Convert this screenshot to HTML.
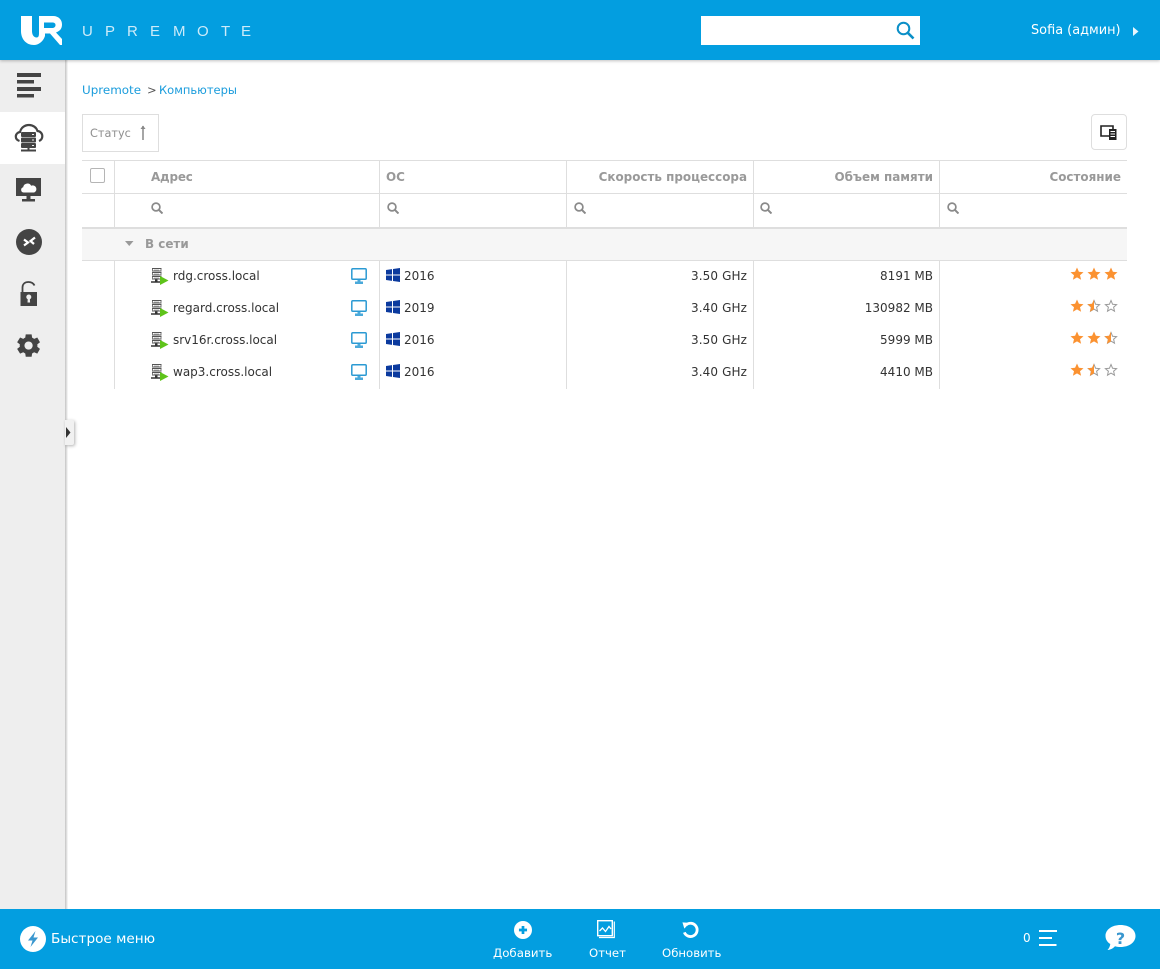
<!DOCTYPE html>
<html lang="ru"><head><meta charset="utf-8"><title>Upremote</title>
<style>
html,body{margin:0;padding:0;width:1160px;height:969px;overflow:hidden;background:#fff;font-family:"DejaVu Sans","Liberation Sans",sans-serif;color:#333}
.a{position:absolute}
svg{position:absolute;display:block;overflow:visible}
.t{position:absolute;white-space:nowrap;font-size:12px;line-height:16px;color:#333}
.r{text-align:right}
.h{font-weight:bold;color:#999;font-size:11.950px}
.ln{position:absolute;background:#dedede}
</style></head><body>
<svg width="0" height="0" style="position:absolute"><defs>
<symbol id="mag" viewBox="0 0 12 12"><circle cx="5" cy="5" r="3.900" fill="none" stroke="#8a8a8a" stroke-width="1.700"/><path d="M7.800 7.800L11.500 11.500" stroke="#8a8a8a" stroke-width="2"/></symbol>
<symbol id="srv" viewBox="0 0 18 18"><path d="M1 .5h9.500M1 3h9.500M1 4.500h9.500M1 7h9.500M1 8.500h9.500M1 11h9.500" stroke="#555" stroke-width="1" fill="none"/><path d="M1 1h1v2H1zM9.500 1h1v2h-1zM1 5h1v2H1zM9.500 5h1v2h-1zM1 9h1v2H1zM9.500 9h1v2h-1z" fill="#777"/><path d="M3 1.500h5v1H3zM3 5.500h5v1H3zM3 9.500h5v1H3z" fill="#b5b5b5"/><path d="M0 13.200h4v-1.700h2.500v1.700h3v1.600H0z" fill="#333"/><path d="M9 8l8.500 4.500L9 17z" fill="#5ec31a"/></symbol>
<symbol id="mon" viewBox="0 0 16 16"><rect x=".8" y=".8" width="14.400" height="10.400" rx="1" fill="#fff" stroke="#2b9ad3" stroke-width="1.500"/><path d="M6.500 12h3v1.500H12V16H4v-2.500h2.500z" fill="#4aa9da"/></symbol>
<symbol id="win" viewBox="0 0 14 14"><path d="M0 2l6-.9V6.500H0zM7 1l7-1V6.500H7zM0 7.500h6v5.400L0 12zM7 7.500h7V14l-7-1z" fill="#0b3a9e"/></symbol>
<symbol id="sf" viewBox="0 0 14 14"><path d="M7 .5l1.900 4.300 4.600.4-3.500 3 1.100 4.600L7 10.400 2.900 12.800 4 8.200.5 5.200l4.600-.4z" fill="#fb9231"/></symbol>
<symbol id="sh" viewBox="0 0 14 14"><path d="M7 1.500l1.600 3.800 4 .3-3 2.600.9 4L7 10.100l-3.500 2.100.9-4-3-2.600 4-.3z" fill="#fff" stroke="#9a9a9a"/><path d="M7 .5v9.900L2.900 12.800 4 8.200.5 5.200l4.600-.4z" fill="#fb9231"/></symbol>
<symbol id="se" viewBox="0 0 14 14"><path d="M7 1.500l1.600 3.800 4 .3-3 2.600.9 4L7 10.100l-3.500 2.100.9-4-3-2.600 4-.3z" fill="#fff" stroke="#9a9a9a"/></symbol>
</defs></svg>

<!-- sidebar -->
<div class="a" style="left:0;top:60px;width:65px;height:849px;background:#eee"></div>
<div class="a" style="left:65px;top:60px;width:3px;height:849px;background:linear-gradient(90deg,#c4c4c4,#e8e8e8 70%,#fff)"></div>
<div class="a" style="left:0;top:112px;width:65px;height:52px;background:#fff"></div>

<!-- header -->
<div class="a" style="left:0;top:0;width:1160px;height:60px;background:#039ee0;box-shadow:0 1px 3px rgba(0,0,0,.25)"></div>
<svg style="left:0;top:0" width="270" height="60" viewBox="0 0 270 60">
<path d="M21 16H32V31C32 35 34 37.500 36.500 37.500C38.500 37.500 39 36 39 33V16H53C59 16 62 20 62 24.500C62 28.500 60 31 56 32.500L62 39V45H60L50 33.500H45V36C43 42 38 45 34 45C26 45 21 39 21 31Z" fill="#fff"/>
<path d="M44 22.500H52C54.500 22.500 55.500 23.500 55.500 25C55.500 27 54 28 52 28H44Z" fill="#039ee0"/>
<text y="36" x="82 105 127 150 173 197 221 241" font-family="'Liberation Sans',sans-serif" font-size="15" fill="#cdebf9">UPREMOTE</text>
</svg>

<div class="a" style="left:701px;top:16px;width:219px;height:29px;background:#fff"></div>
<svg style="left:896px;top:21px" width="19" height="19" viewBox="0 0 19 19"><circle cx="7.500" cy="7.500" r="5.800" fill="none" stroke="#0a8fc7" stroke-width="2"/><path d="M11.800 11.800L17.500 17.500" stroke="#0a8fc7" stroke-width="2.600"/></svg>
<div class="t" style="left:1031px;top:23px;color:#fff;font-size:12.900px">Sofia (админ)</div>
<svg style="left:1133px;top:27px" width="6" height="9"><path d="M0 0l5.500 4.500L0 9z" fill="#e8f6fd"/></svg>

<!-- sidebar icons -->
<svg style="left:17px;top:73px" width="24" height="25"><path d="M0 0h24v4H0zM0 7h17v3.500H0zM0 14h24v4H0zM0 21h17v3.500H0z" fill="#444"/></svg>
<svg style="left:15px;top:124px" width="28" height="28" viewBox="0 0 28 28"><path d="M4.500 17C1.500 16 .8 14 .8 12.500 .8 10 3 8.200 5 8 5.800 4 9.500 1 14 1c4 0 7.500 2.500 8.500 6 3 .3 4.800 2.600 4.800 5.200 0 2-1 3.800-3.300 4.800" fill="none" stroke="#444" stroke-width="2.200"/><rect x="6" y="8" width="15" height="5" rx="1" fill="#444"/><rect x="6" y="13.500" width="15" height="5" rx="1" fill="#444"/><rect x="6" y="19" width="15" height="5" rx="1" fill="#444"/><path d="M17 10h2v1h-2zM17 15.500h2v1h-2zM17 21h2v1h-2z" fill="#eee"/><path d="M12.500 24h2v2h-2zM6 25.500h15V27.500H6z" fill="#444"/></svg>
<svg style="left:16px;top:178px" width="26" height="26" viewBox="0 0 26 26"><rect x="0" y="0" width="25" height="18" fill="#444"/><path d="M10.500 18h4v3h-4zM6 21h13v2.500H6z" fill="#444"/><path d="M7.500 14.500a2.700 2.700 0 0 1-.3-5.300 4.300 4.300 0 0 1 8-1.500 3.500 3.500 0 0 1 3 6.800z" fill="#fff"/></svg>
<svg style="left:16px;top:229px" width="26" height="26" viewBox="0 0 26 26"><circle cx="13" cy="13" r="13" fill="#444"/><path d="M8 10.500l4 3-4 3" fill="none" stroke="#fff" stroke-width="2.200"/><path d="M19 8.500l-4.500 3.500 3.500 3" fill="none" stroke="#fff" stroke-width="2.200"/></svg>
<svg style="left:20px;top:281px" width="18" height="26" viewBox="0 0 18 26"><path d="M2.500 11V6.500C2.500 3 5 1 8.500 1c3 0 5 1.500 6 3.500" fill="none" stroke="#444" stroke-width="1.800"/><rect x="0.500" y="11" width="16.500" height="14" fill="#444"/><circle cx="8.800" cy="16" r="2.500" fill="#eee"/><path d="M7.800 16.500h2l.3 5H7.500z" fill="#eee"/></svg>
<svg style="left:16px;top:333px" width="25" height="25" viewBox="0 0 24 24"><path d="M19.400 13c.1-.3.100-.7.100-1s0-.7-.1-1l2.300-1.800-2.300-4-2.700 1.100c-.5-.4-1.100-.8-1.700-1L14.600 2.500h-5L9.200 5.300c-.6.200-1.200.6-1.700 1L4.800 5.200l-2.500 4L4.600 11c-.1.300-.1.700-.1 1s0 .7.100 1l-2.300 1.800 2.500 4 2.700-1.100c.5.400 1.100.8 1.700 1l.4 2.800h5l.4-2.800c.6-.2 1.200-.6 1.700-1l2.700 1.100 2.300-4zM12 15.500a3.500 3.500 0 1 1 0-7 3.500 3.500 0 0 1 0 7z" fill="#444" transform="translate(-1.500 -1.500) scale(1.130)"/></svg>
<div class="a" style="left:65px;top:420px;width:9px;height:25px;background:#f1f1f1;border-radius:0 2px 2px 0;box-shadow:1px 1px 3px rgba(0,0,0,.3)"></div>
<svg style="left:66px;top:427px" width="5" height="11"><path d="M0 0l4.500 5.500L0 11z" fill="#333"/></svg>

<!-- breadcrumb -->
<div class="t" style="left:82px;top:82px;color:#1a9cdc;font-size:11.900px">Upremote</div>
<div class="t" style="left:147px;top:82px;color:#555;font-size:11.500px">&gt;</div>
<div class="t" style="left:159px;top:82px;color:#1a9cdc;font-size:11.500px">Компьютеры</div>

<!-- toolbar -->
<div class="a" style="left:82px;top:114px;width:75px;height:36px;border:1px solid #dedede"></div>
<div class="t" style="left:90px;top:126px;color:#8f8f8f;font-size:11.300px">Статус</div>
<svg style="left:139px;top:125px" width="8" height="15"><path d="M4 1v14" stroke="#888" stroke-width="1.500"/><path d="M1.500 4L4 .5 6.500 4z" fill="#888"/></svg>
<div class="a" style="left:1091px;top:114px;width:34px;height:34px;border:1px solid #dedede;border-radius:4px"></div>
<svg style="left:1100px;top:125px" width="17" height="15" viewBox="0 0 17 15"><path d="M1 1h12v10H1z" fill="#fff" stroke="#222" stroke-width="1.600"/><rect x="9" y="4" width="7.500" height="11" fill="#222"/><path d="M10.500 6.500h4.500M10.500 9h4.500M10.500 11.500h4.500" stroke="#fff"/></svg>

<!-- table lines -->
<div class="ln" style="left:82px;top:160px;width:1045px;height:1px"></div>
<div class="ln" style="left:82px;top:193px;width:1045px;height:1px"></div>
<div class="a" style="left:82px;top:229px;width:1045px;height:31px;background:#f6f6f6"></div>
<div class="ln" style="left:82px;top:227px;width:1045px;height:2px"></div>
<div class="ln" style="left:82px;top:260px;width:1045px;height:1px"></div>
<div class="ln" style="left:114px;top:160px;width:1px;height:67px"></div>
<div class="ln" style="left:379px;top:160px;width:1px;height:67px"></div>
<div class="ln" style="left:566px;top:160px;width:1px;height:67px"></div>
<div class="ln" style="left:753px;top:160px;width:1px;height:67px"></div>
<div class="ln" style="left:939px;top:160px;width:1px;height:67px"></div>
<div class="ln" style="left:114px;top:261px;width:1px;height:128px"></div>
<div class="ln" style="left:379px;top:261px;width:1px;height:128px"></div>
<div class="ln" style="left:566px;top:261px;width:1px;height:128px"></div>
<div class="ln" style="left:753px;top:261px;width:1px;height:128px"></div>
<div class="ln" style="left:939px;top:261px;width:1px;height:128px"></div>

<!-- header cells -->
<div class="a" style="left:90px;top:168px;width:13px;height:13px;border:1px solid #b5b5b5;border-radius:2px"></div>
<div class="t h" style="left:151px;top:169px;letter-spacing:-.2px">Адрес</div>
<div class="t h" style="left:386px;top:169px">ОС</div>
<div class="t h r" style="left:547px;top:169px;width:200px">Скорость процессора</div>
<div class="t h r" style="left:733px;top:169px;width:200px">Объем памяти</div>
<div class="t h r" style="left:921px;top:169px;width:200px">Состояние</div>

<svg style="left:151px;top:202px" width="12" height="12"><use href="#mag"/></svg>
<svg style="left:387px;top:202px" width="12" height="12"><use href="#mag"/></svg>
<svg style="left:574px;top:202px" width="12" height="12"><use href="#mag"/></svg>
<svg style="left:760px;top:202px" width="12" height="12"><use href="#mag"/></svg>
<svg style="left:947px;top:202px" width="12" height="12"><use href="#mag"/></svg>

<svg style="left:125px;top:241px" width="9" height="5"><path d="M0 0h8.500L4.250 5z" fill="#999"/></svg>
<div class="t h" style="left:145px;top:236px">В сети</div>

<!-- row 1 -->
<svg style="left:151px;top:268px" width="18" height="18"><use href="#srv"/></svg>
<div class="t" style="left:173px;top:268px">rdg.cross.local</div>
<svg style="left:351px;top:268px" width="16" height="16"><use href="#mon"/></svg>
<svg style="left:386px;top:268px" width="14" height="14"><use href="#win"/></svg>
<div class="t" style="left:404px;top:268px">2016</div>
<div class="t r" style="left:546px;top:268px;width:201px;letter-spacing:.1px">3.50 GHz</div>
<div class="t r" style="left:733px;top:268px;width:200px">8191 MB</div>
<svg style="left:1070px;top:267px" width="14" height="14"><use href="#sf"/></svg>
<svg style="left:1087px;top:267px" width="14" height="14"><use href="#sf"/></svg>
<svg style="left:1104px;top:267px" width="14" height="14"><use href="#sf"/></svg>

<!-- row 2 -->
<svg style="left:151px;top:300px" width="18" height="18"><use href="#srv"/></svg>
<div class="t" style="left:173px;top:300px">regard.cross.local</div>
<svg style="left:351px;top:300px" width="16" height="16"><use href="#mon"/></svg>
<svg style="left:386px;top:300px" width="14" height="14"><use href="#win"/></svg>
<div class="t" style="left:404px;top:300px">2019</div>
<div class="t r" style="left:546px;top:300px;width:201px;letter-spacing:.1px">3.40 GHz</div>
<div class="t r" style="left:733px;top:300px;width:200px">130982 MB</div>
<svg style="left:1070px;top:299px" width="14" height="14"><use href="#sf"/></svg>
<svg style="left:1087px;top:299px" width="14" height="14"><use href="#sh"/></svg>
<svg style="left:1104px;top:299px" width="14" height="14"><use href="#se"/></svg>

<!-- row 3 -->
<svg style="left:151px;top:332px" width="18" height="18"><use href="#srv"/></svg>
<div class="t" style="left:173px;top:332px">srv16r.cross.local</div>
<svg style="left:351px;top:332px" width="16" height="16"><use href="#mon"/></svg>
<svg style="left:386px;top:332px" width="14" height="14"><use href="#win"/></svg>
<div class="t" style="left:404px;top:332px">2016</div>
<div class="t r" style="left:546px;top:332px;width:201px;letter-spacing:.1px">3.50 GHz</div>
<div class="t r" style="left:733px;top:332px;width:200px">5999 MB</div>
<svg style="left:1070px;top:331px" width="14" height="14"><use href="#sf"/></svg>
<svg style="left:1087px;top:331px" width="14" height="14"><use href="#sf"/></svg>
<svg style="left:1104px;top:331px" width="14" height="14"><use href="#sh"/></svg>

<!-- row 4 -->
<svg style="left:151px;top:364px" width="18" height="18"><use href="#srv"/></svg>
<div class="t" style="left:173px;top:364px">wap3.cross.local</div>
<svg style="left:351px;top:364px" width="16" height="16"><use href="#mon"/></svg>
<svg style="left:386px;top:364px" width="14" height="14"><use href="#win"/></svg>
<div class="t" style="left:404px;top:364px">2016</div>
<div class="t r" style="left:546px;top:364px;width:201px;letter-spacing:.1px">3.40 GHz</div>
<div class="t r" style="left:733px;top:364px;width:200px">4410 MB</div>
<svg style="left:1070px;top:363px" width="14" height="14"><use href="#sf"/></svg>
<svg style="left:1087px;top:363px" width="14" height="14"><use href="#sh"/></svg>
<svg style="left:1104px;top:363px" width="14" height="14"><use href="#se"/></svg>

<!-- footer -->
<div class="a" style="left:0;top:909px;width:1160px;height:60px;background:#039ee0"></div>
<svg style="left:20px;top:926px" width="26" height="26" viewBox="0 0 26 26"><circle cx="13" cy="13" r="13" fill="#fff"/><path d="M15.500 5L8 14.500h4.500L10.500 21l7.500-9.500h-4.500z" fill="#3a97cf"/></svg>
<div class="t" style="left:51px;top:931px;color:#fff;font-size:13.600px;line-height:16px">Быстрое меню</div>

<svg style="left:514px;top:921px" width="18" height="18" viewBox="0 0 20 20"><circle cx="10" cy="10" r="10" fill="#fff"/><path d="M8.500 5.500h3v3H14.500v3h-3v3h-3v-3h-3v-3h3z" fill="#039ee0"/></svg>
<div class="t" style="left:493px;top:945px;color:#fff;font-size:11.800px">Добавить</div>
<svg style="left:597px;top:920px" width="18" height="18" viewBox="0 0 18 18"><rect x=".7" y=".7" width="14.600" height="15" fill="none" stroke="#fff" stroke-width="1.400"/><path d="M17.300 1.500v16H2" fill="none" stroke="#fff" stroke-width="1.200"/><path d="M2.500 11l3-3 3 3.500 3.500-5 2 2.500" fill="none" stroke="#fff" stroke-width="1.300"/></svg>
<div class="t" style="left:589px;top:945px;color:#fff;font-size:11.700px">Отчет</div>
<svg style="left:681px;top:921px" width="19" height="18" viewBox="0 0 20 19"><path d="M5.500 4A7 7 0 1 1 3.500 12" fill="none" stroke="#fff" stroke-width="3"/><path d="M1.500 1.500l7.500.5-5.500 6z" fill="#fff"/></svg>
<div class="t" style="left:662px;top:945px;color:#fff;font-size:11.700px">Обновить</div>

<div class="t" style="left:1023px;top:930px;color:#fff;font-size:12px">0</div>
<svg style="left:1039px;top:930px" width="18" height="17"><path d="M0 0h18v2H0zM0 7h13v2H0zM0 14h17.500v2H0z" fill="#fff"/></svg>
<svg style="left:1105px;top:925px" width="31" height="25" viewBox="0 0 31 25"><path d="M15.500 0C24 0 30.500 4.500 30.500 11S24 22 15.500 22c-2 0-3.700-.2-5.500-.8C8 23.500 5.500 24.500 2.500 25 4 23.500 5 21.500 5.300 19 2 17 .5 14 .5 11 .5 4.500 7 0 15.500 0z" fill="#fff"/><text x="15.500" y="19" text-anchor="middle" font-family="'DejaVu Sans',sans-serif" font-weight="bold" font-size="16" fill="#3a97cf">?</text></svg>
</body></html>
